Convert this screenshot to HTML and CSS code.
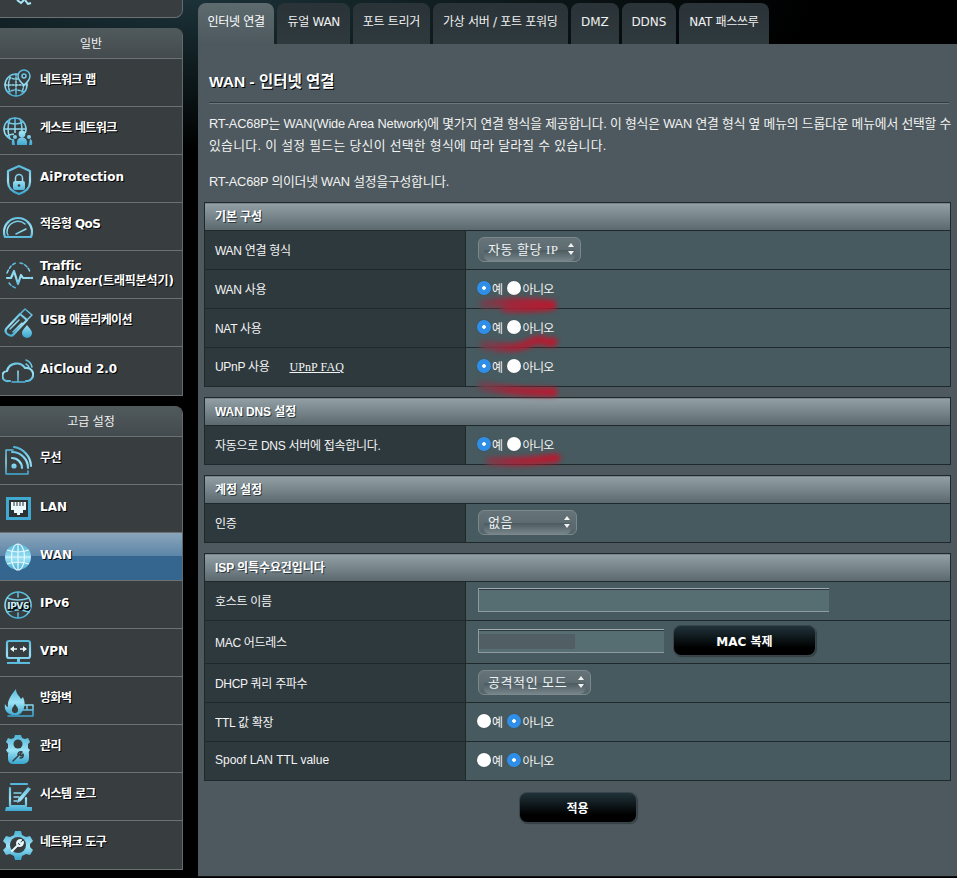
FILE: index.html
```html
<!DOCTYPE html>
<html lang="ko">
  <head>
    <meta charset="utf-8">
    <title>WAN - 인터넷 연결</title>
    <link rel="stylesheet" href="styles.css">
  </head>
  <body>
    <svg class="defs" width="0" height="0">
      <defs>
        <linearGradient id="ic" gradientUnits="userSpaceOnUse" x1="0" y1="2" x2="0" y2="30">
          <stop offset="0" stop-color="#4fb4d8" />
          <stop offset="0.55" stop-color="#9be2f5" />
          <stop offset="1" stop-color="#3fa9d2" />
        </linearGradient>
        <linearGradient id="scr" gradientUnits="userSpaceOnUse" x1="480" y1="0" x2="560" y2="0">
          <stop offset="0" stop-color="#6b4450" />
          <stop offset="0.4" stop-color="#a82238" />
          <stop offset="1" stop-color="#c4142a" />
        </linearGradient>
      </defs>
    </svg>

    <aside class="sidebar">
      <div class="panel panel-stub">
        <svg class="stub-icon" width="16" height="5" viewBox="0 0 16 5"><path d="M1 0l4 3 3-3M9 0l3 4 3-1" fill="none" stroke="#a9e6f6" stroke-width="2" /></svg>
      </div>

      <div class="panel">
        <div class="panel-head">일반</div>
        <a class="item">
          <svg class="icon" viewBox="0 0 32 32"><g class="line"><circle cx="14" cy="18" r="11" /><path d="M3 18h22M14 7v22M7 10q7 4 14 0M6 25q8-4 16 0M8 11q-3 7 0 14M20 11q3 7 0 14" stroke-dasharray="2 1.5" /></g><path class="cut" d="M22 3a6 6 0 0 1 6 6c0 4-6 9-6 9s-6-5-6-9a6 6 0 0 1 6-6z" /><circle class="line" cx="22" cy="9" r="2" /></svg>
          <span class="ko">네트워크 맵</span>
        </a>
        <a class="item">
          <svg class="icon" viewBox="0 0 32 32"><g class="line"><circle cx="13" cy="14" r="11" /><path d="M2 14h22M13 3v22M5 7q8 4 16 0M5 21q8-4 16 0M8 4q-4 10 0 20M18 4q4 10 0 20" /></g><path class="cut-plain" d="M12 18h16v12H12z" /><g class="solid"><circle cx="20" cy="19" r="3.400" /><path d="M15 30q-1-7 5-8 6 1 5 8z" /><circle cx="13" cy="22" r="2" /><circle cx="27" cy="22" r="2" /><path d="M10 30q-1-5 2-6l1 6zM30 30q1-5-2-6l-1 6z" /></g></svg>
          <span class="ko">게스트 네트워크</span>
        </a>
        <a class="item">
          <svg class="icon" viewBox="0 0 32 32"><path class="line thick" d="M17 3l11 5v11c0 6-5 10-11 12C11 29 6 25 6 19V8z" /><path class="line" d="M13.500 18v-3a3.500 3.500 0 0 1 7 0v3" /><rect class="solid" x="11" y="18" width="12" height="9" rx="2" /><circle cx="17" cy="22.500" r="1.300" fill="#383d40" /></svg>
          <span>AiProtection</span>
        </a>
        <a class="item">
          <svg class="icon" viewBox="0 0 32 32"><path class="line thick" d="M3 26c-1-2-1-4-1-5a14 14 0 0 1 28 0c0 1 0 3-1 5z" /><path class="line" d="M6 24c-1-1-1-2-1-3a11 11 0 0 1 18-8" /><path class="line" d="M14 23l10-5" /></svg>
          <span class="ko">적응형 QoS</span>
        </a>
        <a class="item item-wrap">
          <svg class="icon" viewBox="0 0 32 32"><path class="line thick" d="M5 19h4l3-7 4 13 3-9 2 3h7" /><path class="line" stroke-dasharray="3 2" d="M5 14Q9 5 14 4M18 4q7 1 10 9M7 24q3 4 7 5" /><circle class="solid" cx="30" cy="19" r="1.200" /></svg>
          <span>Traffic<br>Analyzer(트래픽분석기)</span>
        </a>
        <a class="item">
          <svg class="icon" viewBox="0 0 32 32"><path class="line thick" d="M4 22L18 7l7 6-14 15c-3 2-9-2-7-6z" /><path class="line" d="M19 6l4-4 7 6-4 4M8 22l9-9M11 25l9-9" /><path class="solid" d="M25 18c2 3 5 5 5 8a5 5 0 0 1-10 0c0-3 3-5 5-8z" /></svg>
          <span class="ko">USB 애플리케이션</span>
        </a>
        <a class="item">
          <svg class="icon" viewBox="0 0 32 32"><path class="line thick" d="M8 26H6a5 5 0 0 1-1-10 10 10 0 0 1 18-3 6.500 6.500 0 0 1 3 13h-2" /><path class="line" d="M16 16v10M10 27h13M24 5q5 2 6 7M24 9q2 1 3 3" /></svg>
          <span>AiCloud 2.0</span>
        </a>
      </div>

      <div class="panel">
        <div class="panel-head">고급 설정</div>
        <a class="item">
          <svg class="icon" viewBox="0 0 32 32"><path class="line" d="M11 5H4v24h22v-3" /><circle class="solid" cx="12" cy="21" r="2.600" /><path class="line thick" d="M10 13a10 10 0 0 1 10 10M10 7a16 16 0 0 1 16 16M12 2a20 20 0 0 1 17 19" /></svg>
          <span class="ko">무선</span>
        </a>
        <a class="item">
          <svg class="icon" viewBox="0 0 32 32"><rect x="4" y="4" width="25" height="23" fill="#3fa9d2" /><rect x="7" y="7" width="19" height="17" fill="#2c3134" /><path d="M9 9h15v8h-3v3h-3v2h-3v-2h-3v-3H9z" fill="#e8f8fc" /><path d="M12 9v4M15 9v4M18 9v4M21 9v4" stroke="#2c3134" /></svg>
          <span>LAN</span>
        </a>
        <a class="item active">
          <svg class="icon" viewBox="0 0 32 32"><circle class="solid" cx="16" cy="16" r="13" /><g class="grid"><path d="M3 16h26M16 3v26M5 9q11 4 22 0M5 23q11-4 22 0" /><ellipse cx="16" cy="16" rx="6.500" ry="13" /></g></svg>
          <span>WAN</span>
        </a>
        <a class="item">
          <svg class="icon" viewBox="0 0 32 32"><g class="line"><circle cx="16" cy="16" r="13" /><path d="M5 9q11 4 22 0M5 23q11-4 22 0M16 3v5M16 24v5" /></g><text class="icon-text" x="16" y="19.500" text-anchor="middle">IPV6</text></svg>
          <span>IPv6</span>
        </a>
        <a class="item">
          <svg class="icon" viewBox="0 0 32 32"><rect class="line thick" x="5" y="4" width="23" height="17" rx="2" /><path class="white" d="M9 12h6M18 12h6" /><path class="white-fill" d="M12 9v6l-4-3zM21 9v6l4-3z" /><path class="solid" d="M15 21h3v4h-3zM5 25h23v2H5z" /></svg>
          <span>VPN</span>
        </a>
        <a class="item">
          <svg class="icon" viewBox="0 0 32 32"><path class="solid" d="M10 30C4 28 2 24 3 19c1 2 2 3 3 3-1-6 3-12 8-18 0 5 3 6 5 10l2-2c2 4 2 8 1 11-1 3-3 6-6 7z" /><path fill="#383d40" d="M12 28c-2-1-3-3-1-6l2-3 2 3c2 3 1 5-1 6z" /><path class="line" d="M20 20h11v11H6M20 25h11M25 20v5" /></svg>
          <span class="ko">방화벽</span>
        </a>
        <a class="item">
          <svg class="icon" viewBox="0 0 32 32"><path class="solid" d="M13 2h6l1 3 3 1 3-1 2 4-2 2v4l2 2-2 3-3-1-3 1H12l-3-1-3 1-2-3 2-2v-4L4 9l2-4 3 1 3-1z" /><circle cx="16" cy="11" r="4.500" fill="#383d40" /><path class="solid" d="M8 18h16c3 0 3 2 3 4v3c0 4-3 6-6 6H11c-3 0-5-2-5-6v-4z" /><path class="line dark" d="M11 28l7-7M16 22q0-4 4-3l-2 2 1 2 2-2q1 4-3 4" /></svg>
          <span class="ko">관리</span>
        </a>
        <a class="item">
          <svg class="icon" viewBox="0 0 32 32"><path class="line thick" d="M9 3h16M8 7v18h16v-8" /><path class="line" d="M12 12h7M12 16h5M12 20h3" /><path class="solid" d="M26 6l3 2-10 12-4 2 1-4z" /><path class="solid" d="M4 26h26v4H3z" /></svg>
          <span class="ko">시스템 로그</span>
        </a>
        <a class="item">
          <svg class="icon" viewBox="0 0 32 32"><path class="solid" d="M13 2h6l1 4 4 2 4-1 3 5-3 3v3l3 3-3 5-4-1-4 2-1 4h-6l-1-4-4-2-4 1-3-5 3-3v-3l-3-3 3-5 4 1 4-2z" /><circle cx="16" cy="16" r="8" fill="#383d40" /><path class="line light" d="M10 22l6-6M15 15q0-4 4-4l-2 2 2 2 2-2q0 4-4 4" /></svg>
          <span class="ko">네트워크 도구</span>
        </a>
      </div>
    </aside>

    <main class="main">
      <nav class="tabs">
        <a class="tab tab-on tab-tight">인터넷 연결</a>
        <a class="tab">듀얼 WAN</a>
        <a class="tab tab-tight">포트 트리거</a>
        <a class="tab tab-wide">가상 서버 / 포트 포워딩</a>
        <a class="tab tab-en">DMZ</a>
        <a class="tab tab-en">DDNS</a>
        <a class="tab">NAT 패스쓰루</a>
      </nav>

      <div class="content">
        <h1>WAN - 인터넷 연결</h1>
        <p class="intro"><span class="intro-a">RT-AC68P는 WAN(Wide Area Network)에 몇가지 연결 형식을 제공합니다. 이 형식은 WAN 연결 형식 옆 메뉴의 드롭다운 메뉴에서 선택할 수</span><br><span class="intro-b">있습니다. 이 설정 필드는 당신이 선택한 형식에 따라 달라질 수 있습니다.</span></p>
        <p class="intro intro-2">RT-AC68P 의이더넷 WAN 설정을구성합니다.</p>

        <table>
          <colgroup><col class="col-key"><col></colgroup>
          <tr><th colspan="2">기본 구성</th></tr>
          <tr>
            <td class="key">WAN 연결 형식</td>
            <td><div class="select select-wan"><span>자동 할당 IP</span><i class="arrows"></i></div></td>
          </tr>
          <tr>
            <td class="key">WAN 사용</td>
            <td><label class="radio"><input type="radio" name="wan" checked>예</label><label class="radio"><input type="radio" name="wan">아니오</label></td>
          </tr>
          <tr>
            <td class="key">NAT 사용</td>
            <td><label class="radio"><input type="radio" name="nat" checked>예</label><label class="radio"><input type="radio" name="nat">아니오</label></td>
          </tr>
          <tr>
            <td class="key">UPnP 사용 <a class="faq">UPnP FAQ</a></td>
            <td><label class="radio"><input type="radio" name="upnp" checked>예</label><label class="radio"><input type="radio" name="upnp">아니오</label></td>
          </tr>
        </table>

        <table>
          <colgroup><col class="col-key"><col></colgroup>
          <tr><th colspan="2">WAN DNS 설정</th></tr>
          <tr>
            <td class="key">자동으로 DNS 서버에 접속합니다.</td>
            <td><label class="radio"><input type="radio" name="dns" checked>예</label><label class="radio"><input type="radio" name="dns">아니오</label></td>
          </tr>
        </table>

        <table>
          <colgroup><col class="col-key"><col></colgroup>
          <tr><th colspan="2">계정 설정</th></tr>
          <tr>
            <td class="key">인증</td>
            <td><div class="select select-auth"><span>없음</span><i class="arrows"></i></div></td>
          </tr>
        </table>

        <table>
          <colgroup><col class="col-key"><col></colgroup>
          <tr><th colspan="2">ISP 의특수요건입니다</th></tr>
          <tr>
            <td class="key">호스트 이름</td>
            <td><input class="text text-host" type="text"></td>
          </tr>
          <tr class="row-mac">
            <td class="key">MAC 어드레스</td>
            <td class="mac-cell">
              <div class="mac-input"><input class="text text-mac" type="text"><span class="mac-blur"></span></div>
              <button class="btn btn-mac" type="button">MAC 복제</button>
            </td>
          </tr>
          <tr>
            <td class="key">DHCP 쿼리 주파수</td>
            <td><div class="select select-dhcp"><span>공격적인 모드</span><i class="arrows"></i></div></td>
          </tr>
          <tr>
            <td class="key">TTL 값 확장</td>
            <td><label class="radio"><input type="radio" name="ttl">예</label><label class="radio"><input type="radio" name="ttl" checked>아니오</label></td>
          </tr>
          <tr>
            <td class="key key-en">Spoof LAN TTL value</td>
            <td><label class="radio"><input type="radio" name="spoof">예</label><label class="radio"><input type="radio" name="spoof" checked>아니오</label></td>
          </tr>
        </table>

        <div class="apply"><button class="btn btn-apply" type="button">적용</button></div>
      </div>

      <!-- red marks drawn on top of the screenshot -->
      <svg class="scribbles" viewBox="198 0 759 878">
        <path d="M484 304Q520 300 555 305Q540 309 505 308" />
        <path d="M484 345Q510 350 525 345Q535 340 541 340Q548 343 553 342" />
        <path d="M482 386Q510 392 553 392" />
        <path d="M490 461Q520 463 556 458" />
      </svg>
    </main>
  </body>
</html>
```

FILE: styles.css
```css
html,
body {
  height: 100%;
}

body {
  margin: 0;
  height: 878px;
  overflow: hidden;
  display: flex;
  align-items: flex-start;
  gap: 15px;
  background: radial-gradient(ellipse 620px 150px at 190px 0, #1b3238, #000 100%), #000;
  font-family: "Liberation Sans", "Noto Sans CJK KR", sans-serif;
  font-size: 12px;
  color: #fff;
}

.defs {
  position: absolute;
}

/* sidebar */
.sidebar {
  width: 183px;
  flex: none;
}

.panel {
  margin-bottom: 10px;
  background: #383d40;
  border-right: 1px solid #63696c;
  border-bottom: 1px solid #6b7073;
  border-top-right-radius: 8px;
}

.panel-stub {
  height: 17px;
  border-radius: 0 0 8px 0;
}

.stub-icon {
  display: block;
  margin-left: 16px;
}

.panel-head {
  box-sizing: border-box;
  height: 31px;
  padding-top: 2px;
  line-height: 29px;
  text-align: center;
  font-size: 12px;
  color: #f0f0f0;
  background: linear-gradient(#505a5d, #444b4e);
  border-bottom: 1px solid #6b7073;
  border-top-right-radius: 8px;
}

.item {
  display: flex;
  align-items: center;
  gap: 6px;
  height: 47px;
  padding-left: 2px;
  font-family: "DejaVu Sans", "Noto Sans CJK KR", sans-serif;
  font-size: 12px;
  font-weight: bold;
  line-height: 15px;
  color: #fff;
  text-shadow: 1px 1px 0 #000;
  border-bottom: 1px solid #6b7073;
}

.item:last-child {
  border-bottom: 0;
  height: 48px;
}

.item span {
  padding-bottom: 2px;
  white-space: nowrap;
}

.item .ko {
  padding-bottom: 4px;
  letter-spacing: -0.6px;
}

.item:last-child span {
  padding-bottom: 4px;
}

.item:last-child .ko {
  padding-bottom: 6px;
}

.item-wrap span {
  padding-bottom: 1px;
  letter-spacing: -0.15px;
}

.active {
  background: linear-gradient(#8aa5ba, #5d86a8 48%, #35668f 49%, #35668f);
}

.icon {
  width: 32px;
  height: 32px;
  flex: none;
}

.line {
  fill: none;
  stroke: url(#ic);
  stroke-width: 1.5;
  stroke-linecap: round;
  stroke-linejoin: round;
}

.thick {
  stroke-width: 2.2;
}

.dark {
  stroke: #383d40;
}

.light {
  stroke: #e8f8fc;
  stroke-width: 2;
}

.white {
  fill: none;
  stroke: #e8f8fc;
  stroke-width: 1.5;
}

.white-fill {
  fill: #e8f8fc;
}

.solid {
  fill: url(#ic);
}

.cut {
  fill: #383d40;
  stroke: url(#ic);
  stroke-width: 1.5;
}

.cut-plain {
  fill: #383d40;
}

.grid {
  fill: none;
  stroke: #e8f8fc;
  stroke-width: 1.2;
}

.icon-text {
  font-family: "DejaVu Sans", sans-serif;
  font-size: 9px;
  font-weight: bold;
  letter-spacing: -0.4px;
  fill: #c9f0fa;
  paint-order: stroke;
  stroke: #383d40;
  stroke-width: 1.5;
}

/* main area */
.main {
  position: relative;
  width: 759px;
  flex: none;
  padding-top: 3px;
}

.tabs {
  display: flex;
  gap: 3px;
  height: 41px;
}

.tab {
  padding: 0 10.1px;
  line-height: 39px;
  font-family: "DejaVu Sans", "Noto Sans CJK KR", sans-serif;
  font-size: 12px;
  letter-spacing: -0.3px;
  color: #f0f0f0;
  white-space: nowrap;
  background: linear-gradient(#2a3337, #2f3a3e);
  border-radius: 8px 8px 0 0;
}

.tab-on {
  color: #fff;
  background: linear-gradient(#5d6a6e, #4d595e);
}

.tab-tight {
  padding: 0 9.6px;
}

.tab-wide {
  padding: 0 10.6px;
}

.tab-en {
  padding: 0 9.8px;
  letter-spacing: 0;
}

.content {
  height: 833px;
  box-sizing: border-box;
  padding: 23px 6px 0;
  background: #4d595e;
  border-bottom: 1px solid #111;
}

h1 {
  margin: 0 0 0 5px;
  width: 740px;
  height: 35px;
  font-size: 15.5px;
  line-height: 30px;
  font-weight: bold;
  text-shadow: 1px 1px 0 #000;
  border-bottom: 1px solid #2f3a3e;
  box-shadow: 0 1px 0 #6c787c;
}

.intro {
  margin: 10px 0 0 5px;
  font-size: 12.8px;
  line-height: 22px;
  color: #f2f2f2;
  white-space: nowrap;
}

.intro-a {
  letter-spacing: -0.17px;
}

.intro-b {
  letter-spacing: 0.33px;
}

.intro-2 {
  margin-top: 14px;
  letter-spacing: -0.2px;
}

table {
  width: 747px;
  margin-bottom: 10px;
  table-layout: fixed;
  border-collapse: collapse;
  border: 1px solid #1f282b;
}

.intro-2 + table {
  margin-top: 9px;
}

.col-key {
  width: 261px;
}

th {
  height: 25px;
  padding: 0 0 2px 10px;
  text-align: left;
  font-size: 12px;
  font-weight: bold;
  letter-spacing: -0.1px;
  color: #fff;
  text-shadow: 1px 1px 0 #2f3a3e;
  background: linear-gradient(#929fa5, #5b696e);
}

td {
  height: 36px;
  padding: 0 0 2px 12px;
  background: #475a5f;
  border: 1px solid #1f282b;
}

td.key {
  padding: 0 0 2px 10px;
  letter-spacing: -0.3px;
  background: #2e393e;
  color: #f4f4f4;
}

td.key-en {
  letter-spacing: 0;
}

.row-mac td {
  height: 40px;
}

.faq {
  margin-left: 17px;
  font-family: "Liberation Serif", serif;
  letter-spacing: 0.1px;
  text-decoration: underline;
}

/* controls */
.select {
  position: relative;
  display: flex;
  align-items: center;
  justify-content: space-between;
  box-sizing: border-box;
  height: 25px;
  padding: 0 6px 1px 9px;
  font-family: "Liberation Serif", "Noto Sans CJK KR", serif;
  font-size: 13px;
  letter-spacing: 0.6px;
  color: #eef2f2;
  background: linear-gradient(#66747a, #55646a);
  border: 1px solid #7b888c;
  border-radius: 6px;
}

.select::before {
  content: "";
  position: absolute;
  left: 5px;
  right: 5px;
  bottom: 0;
  height: 11px;
  background: linear-gradient(#4c5b60, #77858a);
  border-radius: 0 0 5px 5px;
}

.select span,
.arrows {
  position: relative;
}

.select-wan {
  width: 103px;
}

.select-auth {
  width: 99px;
}

.select-dhcp {
  width: 113px;
}

.arrows {
  width: 6px;
  height: 12px;
  margin-top: 1px;
}

.arrows::before,
.arrows::after {
  content: "";
  position: absolute;
  left: 0;
  border-left: 3px solid transparent;
  border-right: 3px solid transparent;
}

.arrows::before {
  top: 0;
  border-bottom: 4px solid #f2f2f2;
}

.arrows::after {
  bottom: 0;
  border-top: 4px solid #f2f2f2;
}

.radio {
  display: inline-flex;
  align-items: center;
  margin-right: 5px;
  padding-top: 2px;
  letter-spacing: -0.6px;
  color: #f4f4f4;
}

.radio input {
  appearance: none;
  width: 14px;
  height: 14px;
  margin: 0 1px 0 0;
  background: #fff;
  border-radius: 50%;
  box-shadow: 0 0 1px #2e393e;
}

.radio:first-child input {
  margin-left: -1px;
}

.radio input:checked {
  background: radial-gradient(circle, #fff 0 1.5px, #2f8fe8 2.2px);
}

.text {
  display: block;
  box-sizing: border-box;
  height: 24px;
  margin: 0;
  padding: 0 4px;
  background: #566d71;
  border: 1px solid #8c9ca0;
  border-top: 1px solid #a0adb0;
  border-right: 0;
  box-shadow: inset 0 1px 0 #2c383c;
  outline: none;
}

.text-host {
  width: 351px;
}

.text-mac {
  width: 186px;
}

.mac-cell {
  font-size: 0;
}

.mac-input {
  position: relative;
  display: inline-block;
  vertical-align: middle;
}

.mac-blur {
  position: absolute;
  left: 1px;
  top: 5px;
  width: 96px;
  height: 15px;
  background: #515f64;
}

.btn {
  box-sizing: border-box;
  height: 31px;
  padding: 0;
  font-family: "DejaVu Sans", "Noto Sans CJK KR", sans-serif;
  font-size: 12px;
  font-weight: bold;
  color: #fff;
  background: linear-gradient(#20333a, #000 75%);
  border: 1px solid #39454a;
  border-radius: 8px;
  box-shadow: 1px 1px 1px #333d41;
}

.btn-mac {
  width: 143px;
  margin: 0 0 2px 9px;
  vertical-align: middle;
}

.apply {
  padding-top: 1px;
  text-align: center;
}

.btn-apply {
  width: 118px;
}

.scribbles {
  position: absolute;
  left: 0;
  top: 0;
  width: 759px;
  height: 878px;
  pointer-events: none;
  fill: none;
  stroke: url(#scr);
  stroke-width: 9;
  stroke-linecap: round;
  filter: blur(2.5px);
  opacity: 0.92;
}
```
